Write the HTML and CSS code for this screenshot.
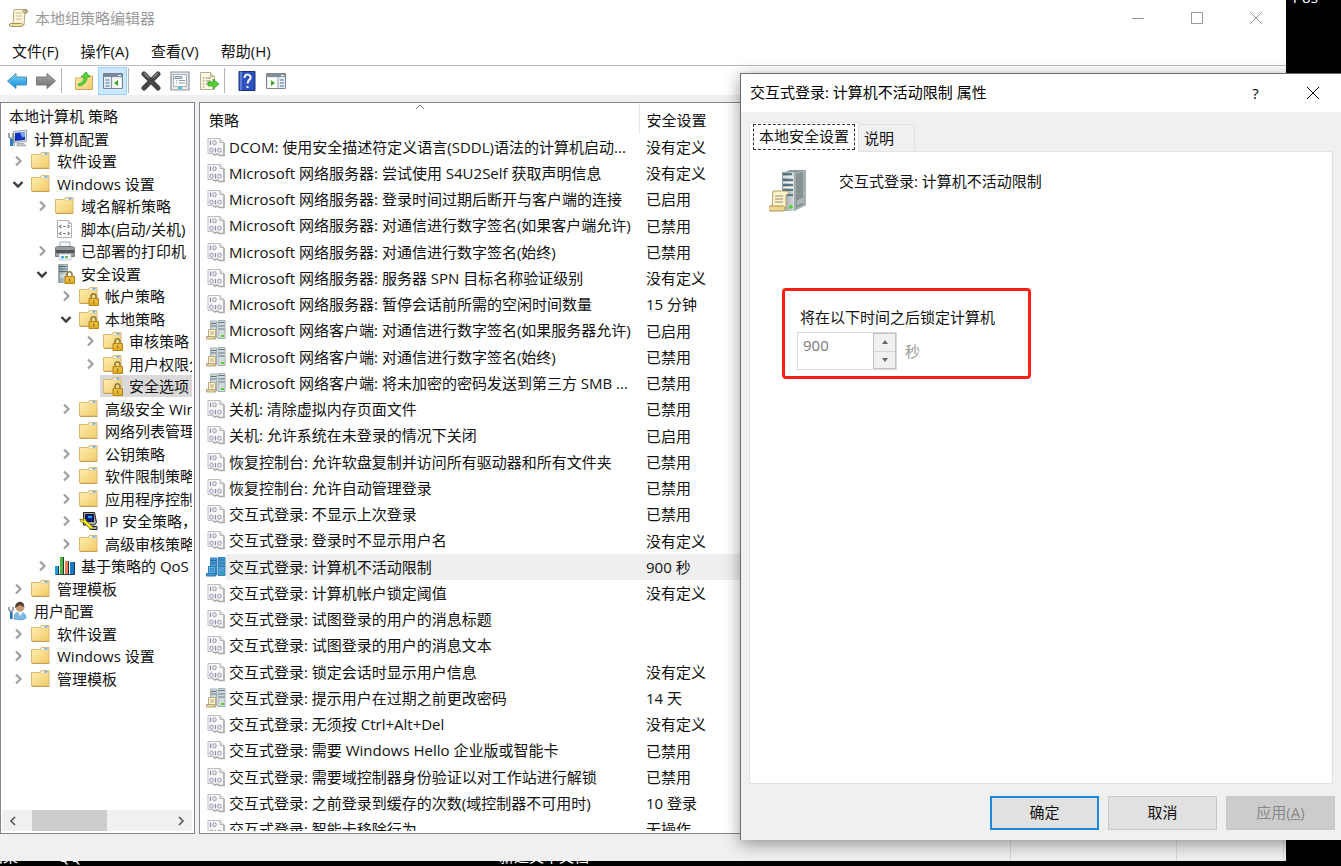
FILE: index.html
```
<!DOCTYPE html>
<html lang="zh-CN">
<head>
  <meta charset="UTF-8">
  <title>本地组策略编辑器</title>
  <meta name="viewport" content="width=device-width, initial-scale=1">
  <link rel="stylesheet" href="styles.css">
</head>
<body>
  <!-- icons -->
  <svg class="sprite" aria-hidden="true">
    <defs>
      <linearGradient id="gold" x1="0" y1="0" x2="1" y2="1"><stop offset="0" stop-color="#fff0b4"/><stop offset="1" stop-color="#f2cb69"/></linearGradient>
      <linearGradient id="steel" x1="0" y1="0" x2="1" y2="0"><stop offset="0" stop-color="#8c9ba0"/><stop offset="1" stop-color="#d5dcdc"/></linearGradient>
      <linearGradient id="blue" x1="0" y1="0" x2="0" y2="1"><stop offset="0" stop-color="#7fd4f8"/><stop offset="1" stop-color="#0c8bdc"/></linearGradient>
      <linearGradient id="grey" x1="0" y1="0" x2="0" y2="1"><stop offset="0" stop-color="#aaa"/><stop offset="1" stop-color="#6c6c6c"/></linearGradient>
    </defs>
    <symbol id="folder" viewBox="0 0 20 20">
      <path d="M.5 3.500h8l2-2h7.500v15.500h-17.500z" fill="url(#gold)" stroke="#dcb871"/>
      <path d="M10.500 2h7v2h-8z" fill="#fff" stroke="#d8c48c" stroke-width=".6"/><path d="M13.500 2.300h3v1.200h-3z" fill="#3894e0"/>
      <path d="M1 17.500h17.500" fill="none" stroke="#c9a155"/>
    </symbol>
    <symbol id="lock" viewBox="0 0 20 20">
      <path d="M12 13v-2.500a2.500 2.700 0 0 1 5 0V13" fill="none" stroke="#8f7a3a" stroke-width="1.600"/>
      <path d="M10 12.500h9.500v7H10z" fill="#e2ad22" stroke="#b58718"/><path d="M11 14h7.500M11 16h7.500" stroke="#f6d566" stroke-width=".8"/><path d="M14.700 14.500v3" stroke="#8a6a14" stroke-width="1.200"/>
    </symbol>
    <symbol id="folder-lock" viewBox="0 0 20 20"><use href="#folder"/><use href="#lock"/></symbol>
    <symbol id="server-lock" viewBox="0 0 20 20">
      <path d="M3.500 .5h9v18h-9z" fill="url(#steel)" stroke="#9aa7aa"/><path d="M4 2.500h8M4 5h8M4 7.500h8" stroke="#4c6c7c"/><path d="M5 11h5M5 13h4" stroke="#eef3f4"/><use href="#lock"/>
    </symbol>
    <symbol id="computer" viewBox="0 0 20 20">
      <path d="M5.500 2.500l13-1.500v11.500l-13 1z" fill="#dfe3ea" stroke="#9da4ad"/><path d="M7 4l10-1v8l-10 1z" fill="#1230bd"/><path d="M12 3.500l5-.5v4.500l-3 1z" fill="#7da6ed"/>
      <path d="M9 14.500h7l2 2.500H9z" fill="#c2c6ca" stroke="#9098a0" stroke-width=".6"/>
      <path d="M1 4v4l2 2 2-2V4M3 9v8" fill="none" stroke="#81909b" stroke-width="1.600"/><path d="M2 10h3v7H2z" fill="#2c7fc4"/><path d="M6 7v10" stroke="#7a8790"/>
    </symbol>
    <symbol id="user" viewBox="0 0 20 20">
      <path d="M6 18c0-5 2-7 6-7s6 3 6 6l-4 2z" fill="#7ebbe5" stroke="#4e90c3" stroke-width=".7"/><path d="M10 11l2 4 3-4" fill="#fff"/>
      <circle cx="12" cy="6" r="4.500" fill="#c89970"/><path d="M7 7c0-8 10-8 9-1l-4-2z" fill="#54402f"/>
      <path d="M1 6v3l2 2 2-2V6M3 10v8" fill="none" stroke="#828c94" stroke-width="1.500"/><path d="M2 11h2.500v7H2z" fill="#286eb0"/>
    </symbol>
    <symbol id="script" viewBox="0 0 20 20">
      <path d="M2.500 1.500h11l3 3v14h-14z" fill="#fff" stroke="#b0b0b0"/><path d="M13.500 1.500v3h3" fill="#ddd" stroke="#b0b0b0"/>
      <path d="M6.500 6l-2 1.500 2 1.500M12.500 6l2 1.500-2 1.500M6.500 13l-2 1.500 2 1.500M12.500 13l2 1.500-2 1.500" fill="none" stroke="#7c848c" stroke-width="1.200"/><path d="M8 7.500h3M8 14.500h3" stroke="#7c848c" stroke-width="1.200"/>
    </symbol>
    <symbol id="printer" viewBox="0 0 20 20">
      <path d="M5 1h10v7H5z" fill="#fafafa" stroke="#9bb0bd"/><path d="M.5 6.500l3-1h13l3 1v9H.5z" fill="#999c9f" stroke="#75797d"/><path d="M1 9h18v3H1z" fill="#505457"/><path d="M4 13h12v6H4z" fill="#f5fbff" stroke="#aebcc4" stroke-width=".7"/><path d="M6 15h3v2.500H6z" fill="#4baae3"/><path d="M10 15h3v2.500h-3z" fill="#81ba62"/>
    </symbol>
    <symbol id="ipsec" viewBox="0 0 20 20">
      <path d="M4.500 1.500h11l2 10-2 2.500h-11z" fill="#a6a8aa" stroke="#222"/><path d="M6.500 3.500h8v7h-8z" fill="#0d1b93" stroke="#111"/><path d="M9 5h4v2H9z" fill="#1ba4e8"/>
      <path d="M10 15.500h8v3h-7z" fill="#aaa" stroke="#222"/><path d="M1 8c0 3 2 4 4 3.500l7 7 2-2-7-7C7 8 5 7 4 7l1 2.500z" fill="#fff41b" stroke="#6b6500" stroke-width=".8"/>
    </symbol>
    <symbol id="bars" viewBox="0 0 20 20">
      <path d="M0 10h4v9H0z" fill="#249ce5"/><path d="M5 1h4v18H5z" fill="#53b73e"/><path d="M10 5h4v14h-4z" fill="#f17e51"/><path d="M15 6h4v13h-4z" fill="#1678c7"/>
      <path d="M3.500 10v9M8.500 1v18M13.500 5v14M19.500 6v13" stroke="#17334a"/><path d="M1 18.500h19" stroke="#284355"/>
    </symbol>
    <symbol id="policy" viewBox="0 0 20 20">
      <path d="M2 1.500h12l4 4v11l.5 2h-5.500l-2-1.500-2 1-2.500-1.500H2z" fill="#f8f8f8" stroke="#bdbdbd"/><path d="M14 1.500v4h4" fill="#e2e2e2" stroke="#b5b5b5"/>
      <path d="M18 6v12.500h-4.500l-2-1.500-2 1-2.500-1" fill="none" stroke="#a8a8a8" stroke-width="1.400"/>
      <path d="M4.500 3.500V8M9.500 11v4.500" stroke="#8f8bab" stroke-width="1.300"/>
      <ellipse cx="8.500" cy="5.700" rx="1.700" ry="2" fill="none" stroke="#8f8bab"/><ellipse cx="5.500" cy="13.200" rx="1.700" ry="2" fill="none" stroke="#8f8bab"/><ellipse cx="13.500" cy="13.200" rx="1.700" ry="2" fill="none" stroke="#8f8bab"/>
    </symbol>
    <symbol id="servers" viewBox="0 0 20 20">
      <path d="M4.500 1h6v17h-6zM12 .5h7v18h-7z" fill="#d3dadb" stroke="#a3afb2"/><path d="M5 3.500h5M5 6h5M12.500 2.500h6M12.500 6h6M12.500 9h6" stroke="#5c7782"/>
      <path d="M15 15h3v2h-3z" fill="#51d331"/><path d="M2.500 9.500h7v8h-7z" fill="#fff4cf" stroke="#b9ab81"/><path d="M4 12h4M4 14h4" stroke="#b5a583"/><path d="M.5 16.500h8l1 2.500H.5z" fill="#e8d59d" stroke="#b3a47b"/>
    </symbol>
    <symbol id="servers-blue" viewBox="0 0 20 20">
      <path d="M4.500 1h6v17h-6zM12 .5h7v18h-7z" fill="#4d9dd2" stroke="#3580b8"/><path d="M5 3.500h5M5 6h5M12.500 3h6M12.500 6h6M12.500 9h6" stroke="#1b6ca8"/>
      <path d="M15 15h3v2h-3z" fill="#20a6a1"/><path d="M2.500 9.500h7v8h-7z" fill="#5bb0e6" stroke="#2f7db6"/><path d="M4 12h4M4 14h4" stroke="#2c78ab"/><path d="M.5 16.500h8l1 2.500H.5z" fill="#4998cd" stroke="#2f78b0"/>
    </symbol>
    <symbol id="scroll" viewBox="0 0 20 20">
      <path d="M5 1.500h12c2 0 2 3.500 0 3.500h-1l-1 12H4z" fill="#fff5d4" stroke="#b5a987"/><path d="M15 1.500c-2 1-1 4 1 3.500h2V2z" fill="#c6b98f" stroke="#8f866c" stroke-width=".7"/><path d="M7 5h6M7 8h6M7 11h6" stroke="#c5bca4"/><path d="M1.500 15.500h11c1 0 2 3 0 3h-11c-1.500 0-1.500-3 0-3z" fill="#f3df9f" stroke="#a29267"/>
    </symbol>
    <symbol id="chev" viewBox="0 0 12 12"><path d="M4 1.500L8.500 6 4 10.500" fill="none" stroke="#a0a0a0" stroke-width="2.200"/></symbol>
    <symbol id="chev-open" viewBox="0 0 12 12"><path d="M1.500 4L6 8.500 10.500 4" fill="none" stroke="#3a3a3a" stroke-width="2.400"/></symbol>
    <symbol id="cross" viewBox="0 0 14 14"><path d="M1 1l12 12M13 1L1 13" fill="none" stroke="currentColor"/></symbol>
  </svg>

  <div class="desktop">
    <span class="desk-label desk-pos">Pos</span>
    <span class="desk-label desk-left">结果</span>
    <span class="desk-label desk-qq">QQ</span>
    <span class="desk-label desk-doc">新建文本文档</span>

    <!-- policy editor -->
    <main class="window">
      <header class="titlebar">
        <svg class="icon"><use href="#scroll"/></svg>
        <h1>本地组策略编辑器</h1>
        <div class="window-buttons">
          <button aria-label="最小化"><svg viewBox="0 0 14 14"><path d="M1 7.500h12" stroke="currentColor"/></svg></button>
          <button aria-label="最大化"><svg viewBox="0 0 14 14"><path d="M1.500 1.500h11v11h-11z" fill="none" stroke="currentColor"/></svg></button>
          <button aria-label="关闭"><svg><use href="#cross"/></svg></button>
        </div>
      </header>
      <nav class="menu">
        <button>文件(F)</button><button>操作(A)</button><button>查看(V)</button><button>帮助(H)</button>
      </nav>
      <div class="toolbar">
        <button aria-label="后退"><svg viewBox="0 0 20 20"><path d="M.5 10l8.500-7.500V6H19.500v8H9v3.500z" fill="url(#blue)" stroke="#4f93bb"/></svg></button>
        <button aria-label="前进"><svg viewBox="0 0 20 20"><path d="M19.500 10L11 2.500V6H.5v8H11v3.500z" fill="url(#grey)" stroke="#7c7c7c"/></svg></button>
        <i class="sep"></i>
        <button aria-label="上一级"><svg viewBox="0 0 20 20"><path d="M1.500 7h7l2-2h8v13.500h-17z" fill="url(#gold)" stroke="#d0aa5c"/><path d="M4 13c4-1 6-3 6-7H7l5-5 4 5h-3c0 5-3 8-8 9z" fill="#55d63a" stroke="#2a9d1d" stroke-width=".7"/></svg></button>
        <button class="on" aria-label="显示/隐藏控制台树"><svg viewBox="0 0 20 20"><path d="M.5 2.500h19v15H.5z" fill="#e8edf1" stroke="#718496"/><path d="M1 3h18v3H1z" fill="#78899a"/><path d="M15 4.500h3" stroke="#fff"/><path d="M8.500 6v11" stroke="#8796a4"/><path d="M2.500 9h4M2.500 12h4M2.500 15h4" stroke="#3d79b3"/><path d="M10 8h8v9h-8z" fill="#fff"/><path d="M15 9v6l-4-3z" fill="#38aa25"/></svg></button>
        <i class="sep"></i>
        <button aria-label="删除"><svg viewBox="0 0 20 20"><path d="M3 3l14 14M17 3L3 17" stroke="#454545" stroke-width="5" stroke-linecap="round"/><path d="M3 2l5 5M17 2l-5 5" stroke="#858585" stroke-width="1.500"/></svg></button>
        <button aria-label="属性"><svg viewBox="0 0 20 20"><path d="M1 1h18v18H1z" fill="#e7e9ea" stroke="#8d959b" stroke-width="1.200"/><path d="M3.500 3.500h13v12h-13z" fill="#fff" stroke="#a7b1b9"/><path d="M5 5.500h7v2H5zM6 9.500h1M9 9.500h6M6 12h1M9 12h6" fill="#d4dde5" stroke="#8898a7"/><path d="M8 16h4v2H8z" fill="#45c2ec"/></svg></button>
        <button aria-label="导出列表"><svg viewBox="0 0 20 20"><path d="M1.500 1.500h10l4 4v13h-14z" fill="#fffbe3" stroke="#b5ae94"/><path d="M11.500 1.500v4h4" fill="#e4dbb6" stroke="#b5ae94"/><path d="M3.500 7h2M7 7h5M3.500 10h2M7 10h5M3.500 13h2M7 13h3M3.500 16h2" stroke="#8b8877"/><path d="M9 11h5V8l6 5-6 5v-3H9z" fill="#50cd37" stroke="#2b9b1a" stroke-width=".7"/></svg></button>
        <i class="sep"></i>
        <button aria-label="帮助"><svg viewBox="0 0 20 20"><path d="M2 .5h16v19H2z" fill="#2c50bd" stroke="#193379"/><path d="M4 .5v19" stroke="#6f8be4" stroke-width="1.500"/><path d="M7.500 7c0-5 7-4 6 0-.5 2-3 2.500-3 5.500M10.500 15v2" fill="none" stroke="#fff" stroke-width="2"/></svg></button>
        <button aria-label="显示/隐藏操作窗格"><svg viewBox="0 0 20 20"><path d="M.5 2.500h19v15H.5z" fill="#e8edf1" stroke="#7d858c"/><path d="M1 3h18v3H1z" fill="#858f99"/><path d="M15 4.500h3" stroke="#fff"/><path d="M12 6v11" stroke="#9ba5ad"/><path d="M14 9h4M14 12h4M14 15h4" stroke="#3d79b3"/><path d="M2 7h9v10H2z" fill="#fff"/><path d="M5 9v6l4-3z" fill="#38aa25"/></svg></button>
      </div>

      <div class="panes">
        <section class="tree-pane">
          <ul class="tree">
            <li class="top"><a href="#">本地计算机 策略</a></li>
            <li><a href="#"><svg><use href="#computer"/></svg>计算机配置</a></li>
            <li class="l1"><button aria-label="展开"><svg><use href="#chev"/></svg></button><a href="#"><svg><use href="#folder"/></svg>软件设置</a></li>
            <li class="l1"><button aria-label="折叠"><svg><use href="#chev-open"/></svg></button><a href="#"><svg><use href="#folder"/></svg>Windows 设置</a></li>
            <li class="l2"><button aria-label="展开"><svg><use href="#chev"/></svg></button><a href="#"><svg><use href="#folder"/></svg>域名解析策略</a></li>
            <li class="l2 leaf"><a href="#"><svg><use href="#script"/></svg>脚本(启动/关机)</a></li>
            <li class="l2"><button aria-label="展开"><svg><use href="#chev"/></svg></button><a href="#"><svg><use href="#printer"/></svg>已部署的打印机</a></li>
            <li class="l2"><button aria-label="折叠"><svg><use href="#chev-open"/></svg></button><a href="#"><svg><use href="#server-lock"/></svg>安全设置</a></li>
            <li class="l3"><button aria-label="展开"><svg><use href="#chev"/></svg></button><a href="#"><svg><use href="#folder-lock"/></svg>帐户策略</a></li>
            <li class="l3"><button aria-label="折叠"><svg><use href="#chev-open"/></svg></button><a href="#"><svg><use href="#folder-lock"/></svg>本地策略</a></li>
            <li class="l4"><button aria-label="展开"><svg><use href="#chev"/></svg></button><a href="#"><svg><use href="#folder-lock"/></svg>审核策略</a></li>
            <li class="l4"><button aria-label="展开"><svg><use href="#chev"/></svg></button><a href="#"><svg><use href="#folder-lock"/></svg>用户权限分配</a></li>
            <li class="l4 leaf"><a class="selected" href="#"><svg><use href="#folder-lock"/></svg>安全选项</a></li>
            <li class="l3"><button aria-label="展开"><svg><use href="#chev"/></svg></button><a href="#"><svg><use href="#folder"/></svg>高级安全 Windows</a></li>
            <li class="l3 leaf"><a href="#"><svg><use href="#folder"/></svg>网络列表管理器策略</a></li>
            <li class="l3"><button aria-label="展开"><svg><use href="#chev"/></svg></button><a href="#"><svg><use href="#folder"/></svg>公钥策略</a></li>
            <li class="l3"><button aria-label="展开"><svg><use href="#chev"/></svg></button><a href="#"><svg><use href="#folder"/></svg>软件限制策略</a></li>
            <li class="l3"><button aria-label="展开"><svg><use href="#chev"/></svg></button><a href="#"><svg><use href="#folder"/></svg>应用程序控制策略</a></li>
            <li class="l3"><button aria-label="展开"><svg><use href="#chev"/></svg></button><a href="#"><svg><use href="#ipsec"/></svg>IP 安全策略，在</a></li>
            <li class="l3"><button aria-label="展开"><svg><use href="#chev"/></svg></button><a href="#"><svg><use href="#folder"/></svg>高级审核策略配置</a></li>
            <li class="l2"><button aria-label="展开"><svg><use href="#chev"/></svg></button><a href="#"><svg><use href="#bars"/></svg>基于策略的 QoS</a></li>
            <li class="l1"><button aria-label="展开"><svg><use href="#chev"/></svg></button><a href="#"><svg><use href="#folder"/></svg>管理模板</a></li>
            <li><a href="#"><svg><use href="#user"/></svg>用户配置</a></li>
            <li class="l1"><button aria-label="展开"><svg><use href="#chev"/></svg></button><a href="#"><svg><use href="#folder"/></svg>软件设置</a></li>
            <li class="l1"><button aria-label="展开"><svg><use href="#chev"/></svg></button><a href="#"><svg><use href="#folder"/></svg>Windows 设置</a></li>
            <li class="l1"><button aria-label="展开"><svg><use href="#chev"/></svg></button><a href="#"><svg><use href="#folder"/></svg>管理模板</a></li>
          </ul>
          <div class="hscroll">
            <button aria-label="向左滚动"><svg viewBox="0 0 8 10"><path d="M6 1L2 5l4 4" fill="none" stroke="#555" stroke-width="1.600"/></svg></button>
            <div class="track"><div class="thumb"></div></div>
            <button aria-label="向右滚动"><svg viewBox="0 0 8 10"><path d="M2 1l4 4-4 4" fill="none" stroke="#555" stroke-width="1.600"/></svg></button>
          </div>
        </section>

        <section class="list-pane">
          <div class="list-view">
          <table>
            <thead>
              <tr><th class="name">策略<svg class="sort" viewBox="0 0 10 6"><path d="M1 5l4-4 4 4" fill="none" stroke="#777"/></svg></th><th>安全设置</th></tr>
            </thead>
            <tbody>
              <tr><td><svg><use href="#policy"/></svg><span>DCOM: 使用安全描述符定义语言(SDDL)语法的计算机启动...</span></td><td>没有定义</td></tr>
              <tr><td><svg><use href="#policy"/></svg><span>Microsoft 网络服务器: 尝试使用 S4U2Self 获取声明信息</span></td><td>没有定义</td></tr>
              <tr><td><svg><use href="#policy"/></svg><span>Microsoft 网络服务器: 登录时间过期后断开与客户端的连接</span></td><td>已启用</td></tr>
              <tr><td><svg><use href="#policy"/></svg><span>Microsoft 网络服务器: 对通信进行数字签名(如果客户端允许)</span></td><td>已禁用</td></tr>
              <tr><td><svg><use href="#policy"/></svg><span>Microsoft 网络服务器: 对通信进行数字签名(始终)</span></td><td>已禁用</td></tr>
              <tr><td><svg><use href="#policy"/></svg><span>Microsoft 网络服务器: 服务器 SPN 目标名称验证级别</span></td><td>没有定义</td></tr>
              <tr><td><svg><use href="#policy"/></svg><span>Microsoft 网络服务器: 暂停会话前所需的空闲时间数量</span></td><td>15 分钟</td></tr>
              <tr><td><svg><use href="#servers"/></svg><span>Microsoft 网络客户端: 对通信进行数字签名(如果服务器允许)</span></td><td>已启用</td></tr>
              <tr><td><svg><use href="#servers"/></svg><span>Microsoft 网络客户端: 对通信进行数字签名(始终)</span></td><td>已禁用</td></tr>
              <tr><td><svg><use href="#servers"/></svg><span>Microsoft 网络客户端: 将未加密的密码发送到第三方 SMB ...</span></td><td>已禁用</td></tr>
              <tr><td><svg><use href="#policy"/></svg><span>关机: 清除虚拟内存页面文件</span></td><td>已禁用</td></tr>
              <tr><td><svg><use href="#policy"/></svg><span>关机: 允许系统在未登录的情况下关闭</span></td><td>已启用</td></tr>
              <tr><td><svg><use href="#policy"/></svg><span>恢复控制台: 允许软盘复制并访问所有驱动器和所有文件夹</span></td><td>已禁用</td></tr>
              <tr><td><svg><use href="#policy"/></svg><span>恢复控制台: 允许自动管理登录</span></td><td>已禁用</td></tr>
              <tr><td><svg><use href="#policy"/></svg><span>交互式登录: 不显示上次登录</span></td><td>已禁用</td></tr>
              <tr><td><svg><use href="#policy"/></svg><span>交互式登录: 登录时不显示用户名</span></td><td>没有定义</td></tr>
              <tr class="selected"><td><svg><use href="#servers-blue"/></svg><span>交互式登录: 计算机不活动限制</span></td><td>900 秒</td></tr>
              <tr><td><svg><use href="#policy"/></svg><span>交互式登录: 计算机帐户锁定阈值</span></td><td>没有定义</td></tr>
              <tr><td><svg><use href="#policy"/></svg><span>交互式登录: 试图登录的用户的消息标题</span></td><td></td></tr>
              <tr><td><svg><use href="#policy"/></svg><span>交互式登录: 试图登录的用户的消息文本</span></td><td></td></tr>
              <tr><td><svg><use href="#policy"/></svg><span>交互式登录: 锁定会话时显示用户信息</span></td><td>没有定义</td></tr>
              <tr><td><svg><use href="#servers"/></svg><span>交互式登录: 提示用户在过期之前更改密码</span></td><td>14 天</td></tr>
              <tr><td><svg><use href="#policy"/></svg><span>交互式登录: 无须按 Ctrl+Alt+Del</span></td><td>没有定义</td></tr>
              <tr><td><svg><use href="#policy"/></svg><span>交互式登录: 需要 Windows Hello 企业版或智能卡</span></td><td>已禁用</td></tr>
              <tr><td><svg><use href="#policy"/></svg><span>交互式登录: 需要域控制器身份验证以对工作站进行解锁</span></td><td>已禁用</td></tr>
              <tr><td><svg><use href="#policy"/></svg><span>交互式登录: 之前登录到缓存的次数(域控制器不可用时)</span></td><td>10 登录</td></tr>
              <tr><td><svg><use href="#policy"/></svg><span>交互式登录: 智能卡移除行为</span></td><td>无操作</td></tr>
            </tbody>
          </table>
          </div>
        </section>
      </div>
      <footer class="statusbar"><span></span><span></span><span></span></footer>
    </main>

    <!-- properties dialog -->
    <form class="dialog" role="dialog" aria-labelledby="dialog-title">
      <header class="dialog-title">
        <h2 id="dialog-title">交互式登录: 计算机不活动限制 属性</h2>
        <button type="button" aria-label="帮助">?</button>
        <button type="button" aria-label="关闭"><svg><use href="#cross"/></svg></button>
      </header>
      <div class="tabs">
        <button type="button" class="tab active"><span>本地安全设置</span></button>
        <button type="button" class="tab">说明</button>
      </div>
      <div class="page">
        <div class="policy-name">
          <svg viewBox="0 0 38 42">
            <path d="M13 3l8-3h16v35l-12 6H13z" fill="#8a9a9d"/><path d="M13 2h12v39H13z" fill="url(#steel)"/><path d="M25 3l12-3v35l-12 6z" fill="#a5aeae"/><path d="M27 4l7-2v33l-7 3z" fill="#879293"/>
            <path d="M14 4h9M14 10h10M14 15h10M14 20h10M14 25h10" stroke="#3f5e6b" stroke-width="1.500"/><path d="M14 7h10M14 12.500h10M14 17.500h10" stroke="#eff5f5" stroke-width="1.500"/>
            <circle cx="22" cy="37" r="1.800" fill="#45d326"/><path d="M29 30v5M31 29v5M33 28v5" stroke="#d1dada"/>
            <path d="M4 21h13c3 0 3 4 0 4v14H3z" fill="#fff3c9" stroke="#b5a16d"/><path d="M6 26h8M6 29h8M6 32h8" stroke="#918b78"/><path d="M1 36h13c3 0 3 5 0 5H1c-2 0-2-5 0-5z" fill="#eed68c" stroke="#a89058"/>
          </svg>
          <span>交互式登录: 计算机不活动限制</span>
        </div>
        <div class="lock-setting">
          <label for="seconds">将在以下时间之后锁定计算机</label>
          <div class="field">
            <div class="spinner">
              <input id="seconds" type="text" value="900" disabled>
              <div class="spin-buttons">
                <button type="button" aria-label="增加" disabled><svg viewBox="0 0 6 4"><path d="M0 4l3-4 3 4z" fill="#666"/></svg></button>
                <button type="button" aria-label="减少" disabled><svg viewBox="0 0 6 4"><path d="M0 0l3 4 3-4z" fill="#666"/></svg></button>
              </div>
            </div>
            <span class="unit">秒</span>
          </div>
        </div>
      </div>
      <div class="actions">
        <button type="button" class="default">确定</button>
        <button type="button">取消</button>
        <button type="button" disabled>应用(<u>A</u>)</button>
      </div>
    </form>
  </div>
</body>
</html>
```
FILE: styles.css
```
* {
  box-sizing: border-box;
}

body {
  margin: 0;
  font-family: "Open Sans", "Noto Sans CJK SC", sans-serif;
  font-size: 15px;
  line-height: 22px;
  color: #111;
}

button, input {
  font: inherit;
  color: inherit;
}

button {
  padding: 0;
  border: 0;
  background: none;
}

a {
  color: inherit;
  text-decoration: none;
}

h1, h2 {
  margin: 0;
  font-size: 15px;
  font-weight: normal;
}

.sprite {
  position: absolute;
  width: 0;
  height: 0;
}

/* desktop */
.desktop {
  position: relative;
  height: 100vh;
  overflow: hidden;
  background: #000;
}

.desk-label {
  position: absolute;
  bottom: -1px;
  color: #fff;
  white-space: nowrap;
}

.desk-pos {
  top: -14px;
  right: 23px;
  bottom: auto;
}

.desk-left {
  left: -12px;
}

.desk-qq {
  left: 58px;
}

.desk-doc {
  left: 499px;
}

/* main window */
.window {
  position: absolute;
  inset: 0 55px 5px 0;
  display: flex;
  flex-direction: column;
  background: #f0f0f0;
}

.titlebar {
  display: flex;
  align-items: center;
  height: 38px;
  padding: 0 1px 3px 9px;
  background: #fff;
  color: #999;
}

.titlebar .icon {
  width: 20px;
  height: 20px;
  margin-right: 6px;
}

.window-buttons {
  display: flex;
  margin-left: auto;
}

.window-buttons button {
  width: 59px;
  height: 35px;
}

.window-buttons svg,
.dialog-title svg {
  display: block;
  width: 14px;
  height: 14px;
  margin: 0 auto;
}

.menu {
  display: flex;
  gap: 22px;
  height: 28px;
  padding: 0 12px;
  background: #fff;
  border-bottom: 1px solid #b9bcc4;
}

.menu button {
  height: 26px;
}

.toolbar {
  display: flex;
  align-items: center;
  height: 29px;
  padding-left: 2px;
  background: #fff;
}

.toolbar button {
  width: 29px;
  height: 28px;
}

.toolbar svg {
  display: block;
  width: 20px;
  height: 20px;
  margin: 0 auto;
}

.toolbar .on {
  background: #cce8ff;
  border: 1px solid #99d1ff;
}

.sep {
  width: 1px;
  height: 25px;
  margin: 0 7px 0 1px;
  background: #b5b5b5;
}

.panes {
  display: flex;
  flex: 1;
  gap: 4px;
  min-height: 0;
  padding-top: 7px;
}

.tree-pane,
.list-pane {
  background: #fff;
  border: 1px solid #828790;
}

.tree-pane {
  display: flex;
  flex-direction: column;
  width: 195px;
  padding: 2px 2px 2px 1px;
}

.tree {
  flex: 1;
  min-height: 0;
  margin: 0;
  padding: 0;
  overflow: hidden;
  list-style: none;
}

.tree li {
  display: flex;
  align-items: center;
  height: 22px;
  padding-left: 6px;
  white-space: nowrap;
}

.tree li:nth-child(even) {
  height: 23px;
}

.tree .top {
  padding-left: 7px;
}

.tree .l2 {
  padding-left: 30px;
}

.tree .l3 {
  padding-left: 54px;
}

.tree .l4 {
  padding-left: 78px;
}

.tree button {
  flex: none;
  width: 20px;
}

.tree .leaf::before {
  content: "";
  flex: none;
  width: 20px;
}

.tree button svg {
  display: block;
  width: 12px;
  height: 12px;
  margin: 0 auto;
}

.tree a {
  display: flex;
  align-items: center;
  flex: 1;
  gap: 6px;
}

.tree li[class] a svg {
  margin-left: 3px;
}

.tree a svg {
  flex: none;
  width: 20px;
  height: 20px;
}

.tree .selected {
  background: #d9d9d9;
}

.hscroll {
  display: flex;
  height: 21px;
  background: #f0f0f0;
}

.hscroll button {
  width: 22px;
}

.hscroll svg {
  display: block;
  width: 8px;
  height: 10px;
  margin: 0 auto;
}

.track {
  flex: 1;
  padding-left: 8px;
}

.thumb {
  width: 54%;
  height: 100%;
  background: #cdcdcd;
}

/* policy list */
.list-pane {
  flex: 1;
  padding-bottom: 2px;
}

.list-view {
  height: 100%;
  overflow: hidden;
}

table {
  width: 100%;
  table-layout: fixed;
  border-collapse: collapse;
}

th, td {
  padding: 0;
  text-align: left;
  font-weight: normal;
  white-space: nowrap;
}

th {
  height: 31px;
  padding: 2px 0 0 7px;
}

th.name {
  position: relative;
  width: 439px;
  padding-left: 9px;
  border-right: 1px solid #e5e5e5;
}

.sort {
  position: absolute;
  top: 1px;
  left: 49%;
  width: 10px;
  height: 6px;
}

tbody tr {
  height: 26px;
}

tbody tr:nth-child(4n) {
  height: 27px;
}

td:first-child {
  display: flex;
  align-items: center;
  height: 100%;
  padding-left: 6px;
}

td:last-child {
  padding-left: 7px;
}

td svg {
  flex: none;
  width: 20px;
  height: 20px;
}

td span {
  flex: 1;
  padding: 2px 0 2px 3px;
}

tr.selected td:last-child,
tr.selected span {
  background: #efefef;
}

.statusbar {
  display: flex;
  justify-content: flex-end;
  height: 27px;
}

.statusbar span {
  width: 166px;
  border-left: 1px solid #d9d9d9;
}

.statusbar span:nth-child(2) {
  width: 107px;
}

.statusbar span:last-child {
  width: 3px;
}

/* dialog */
.dialog {
  position: absolute;
  inset: 73px 0 26px 740px;
  display: flex;
  flex-direction: column;
  background: #f0f0f0;
  border: 1px solid #6b6b6b;
  border-width: 1px 0 0 1px;
  box-shadow: 0 4px 16px rgba(0, 0, 0, 0.4);
}

.dialog-title {
  display: flex;
  align-items: center;
  height: 38px;
  padding-left: 9px;
  background: #fff;
  color: #000;
}

.dialog-title h2 {
  flex: 1;
  padding-bottom: 2px;
}

.dialog-title button {
  width: 57px;
  height: 38px;
}

.tabs {
  display: flex;
  align-items: flex-end;
  padding: 10px 8px 0;
}

.tabs::after {
  content: "";
  flex: 1;
  border-bottom: 1px solid #e2e2e2;
}

.tab {
  height: 28px;
  padding: 0 20px 0 5px;
  border: 1px solid #e2e2e2;
  border-left: 0;
}

.tab.active {
  height: 30px;
  padding: 0 3px 2px;
  background: #fff;
  border-width: 1px 1px 0;
  border-left: 1px solid #e2e2e2;
}

.tab.active span {
  display: block;
  padding: 0 5px 2px;
  border: 1px dashed #333;
}

.page {
  flex: 1;
  margin: 0 8px;
  background: #fff;
  border: 1px solid #e2e2e2;
  border-top: 0;
}

.policy-name {
  display: flex;
  gap: 32px;
  padding: 18px 19px 0;
}

.policy-name svg {
  width: 38px;
  height: 42px;
}

.lock-setting {
  width: 249px;
  margin: 76px 0 0 32px;
  padding: 15px 12px 6px;
  border: 3px solid #ff1f14;
  border-radius: 4px;
}

.lock-setting label {
  display: block;
  padding: 0 3px 4px;
}

.field {
  display: flex;
  align-items: center;
  gap: 8px;
  color: #999;
}

.spinner {
  display: flex;
  width: 100px;
  height: 38px;
  border: 1px solid #d9d9d9;
}

.spinner input {
  flex: 1;
  min-width: 0;
  padding: 0 0 12px 5px;
  border: 0;
  background: #fff;
  color: #777;
}

.spin-buttons {
  display: flex;
  flex-direction: column;
  width: 23px;
  background: #f0f0f0;
  border: 1px solid #c3c3c9;
}

.spin-buttons button {
  flex: 1;
}

.spin-buttons button + button {
  border-top: 1px solid #d5d5d5;
}

.spin-buttons svg {
  display: block;
  width: 6px;
  height: 4px;
  margin: 0 auto;
}

.actions {
  display: flex;
  justify-content: flex-end;
  gap: 9px;
  padding: 12px 6px 10px;
}

.actions button {
  width: 109px;
  height: 34px;
  padding-bottom: 2px;
  background: #e1e1e1;
  border: 1px solid #c8c8c8;
}

.actions .default {
  border: 2px solid #1f86dd;
}

.actions button:disabled {
  background: #ccc;
  color: #888;
}
```
